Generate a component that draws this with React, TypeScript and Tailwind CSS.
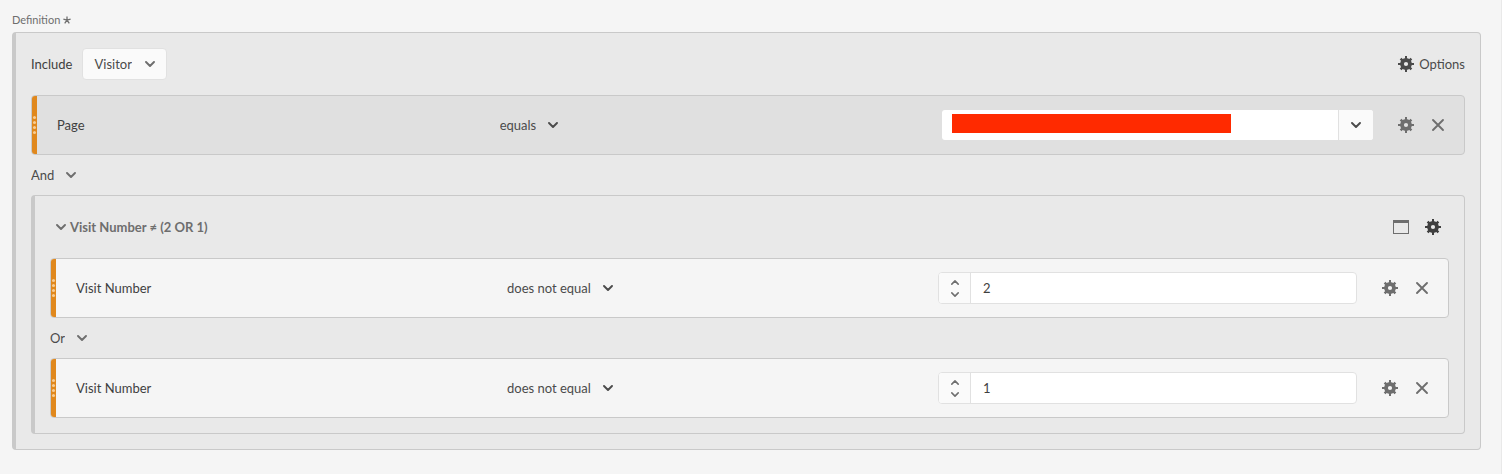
import type { ReactNode } from "react"

// ============================================
// ICONS
// ============================================
function Chevron({ className = "w-2.5 h-1.5" }: { className?: string }) {
  return (
    <svg viewBox="0 0 10 6" className={`shrink-0 ${className}`} fill="none" stroke="currentColor" strokeWidth="1.9" strokeLinecap="round" strokeLinejoin="round" aria-hidden="true">
      <path d="M1 1l4 4 4-4" />
    </svg>
  )
}

function GearIcon() {
  return (
    <svg viewBox="0 0 16 16" className="w-4 h-4 shrink-0" fill="none" stroke="currentColor" aria-hidden="true">
      <circle cx="8" cy="8" r="4" strokeWidth="3.8" />
      <path strokeWidth="2" d="M8 0v3M8 13v3M0 8h3M13 8h3" />
      <path strokeWidth="2.4" d="M2.6 2.6l2 2M11.4 11.4l2 2M2.6 13.4l2-2M11.4 4.6l2-2" />
    </svg>
  )
}

function CrossIcon() {
  return (
    <svg viewBox="0 0 16 16" className="w-4 h-4 shrink-0" fill="none" stroke="currentColor" strokeWidth="1.9" strokeLinecap="round" aria-hidden="true">
      <path d="M3 3l10 10M13 3L3 13" />
    </svg>
  )
}

function WindowIcon() {
  return (
    <svg viewBox="0 0 16 16" className="w-4 h-4 shrink-0" fill="currentColor" aria-hidden="true">
      <path fillRule="evenodd" d="M0 1h16v14H0zM1 4v10h14V4z" />
    </svg>
  )
}

function AsteriskIcon() {
  return (
    <svg viewBox="0 0 8 8" className="w-2 h-2 shrink-0" fill="none" stroke="currentColor" strokeWidth="1.3" aria-hidden="true">
      <path d="M4 4.2V.4M4 4.2l3.6-1.1M4 4.2l2.3 3.2M4 4.2L1.7 7.4M4 4.2L.4 3.1" />
    </svg>
  )
}

// ============================================
// CONTROLS
// ============================================
type DropdownProps = {
  label: string
  options: string[]
  boxed?: boolean
  dark?: boolean
}

function Dropdown({ label, options, boxed = false, dark = false }: DropdownProps) {
  return (
    <div className={`relative inline-flex items-center ${dark ? "text-[#4b4b4b]" : "text-[#6e6e6e]"}`}>
      <select
        aria-label={label}
        className={`appearance-none field-sizing-content h-8 text-[#4b4b4b] ${
          boxed ? "pl-[11px] pr-[34px] rounded border border-[#e1e1e1] bg-[#fafafa]" : "pr-[22px] bg-transparent"
        }`}
      >
        {options.map((option) => (
          <option key={option}>{option}</option>
        ))}
      </select>
      <Chevron className={`absolute w-2.5 h-1.5 pointer-events-none ${boxed ? "right-3" : "right-0"}`} />
    </div>
  )
}

function IconButton({ label, children }: { label: string; children: ReactNode }) {
  return (
    <button type="button" aria-label={label} className="flex items-center justify-center">
      {children}
    </button>
  )
}

function PageField() {
  return (
    <div className="flex h-[30px] rounded-[3px] bg-white overflow-hidden">
      <div className="flex-1 flex items-start pl-2.5 pt-1 min-w-0">
        <span className="w-[279px] h-[19px] bg-[#ff2a00]" />
        <input aria-label="Page value" className="flex-1 min-w-0 bg-transparent outline-none" />
      </div>
      <button type="button" aria-label="Show values" className="w-[35px] flex items-center justify-center border-l border-[#e1e1e1] bg-[#fafafa] text-[#4b4b4b]">
        <Chevron />
      </button>
    </div>
  )
}

function NumberField({ value }: { value: string }) {
  return (
    <div className="flex h-8 rounded border border-[#e1e1e1] bg-white overflow-hidden">
      <div className="w-8 flex flex-col items-center justify-center gap-[7px] border-r border-[#e1e1e1] bg-[#fafafa] text-[#6e6e6e]">
        <IconButton label="Increase">
          <Chevron className="w-2 h-[5px] rotate-180" />
        </IconButton>
        <IconButton label="Decrease">
          <Chevron className="w-2 h-[5px]" />
        </IconButton>
      </div>
      <input aria-label="Visit Number value" defaultValue={value} className="flex-1 min-w-0 px-3 outline-none" />
    </div>
  )
}

// ============================================
// RULE ROW
// ============================================
type RuleProps = {
  name: string
  operator: string
  shaded?: boolean
  children: ReactNode
}

function Rule({ name, operator, shaded = false, children }: RuleProps) {
  return (
    <div className={`flex items-center h-[60px] pr-[18px] rounded border border-[#c9c9c9] overflow-hidden ${shaded ? "bg-[#e0e0e0]" : "bg-[#f5f5f5]"}`}>
      {/* Drag handle */}
      <div className="w-[5px] h-full bg-[#e0881d] flex flex-col items-center justify-center gap-0.5">
        {[0, 1, 2, 3].map((dot) => (
          <span key={dot} className="w-[3px] h-[3px] rounded-full bg-[#f8cd94]" />
        ))}
      </div>
      <div className="flex-1 grid grid-cols-3 items-center pl-5">
        <span>{name}</span>
        <div>
          <Dropdown label={`${name} operator`} options={[operator]} dark />
        </div>
        <div className="pr-3">{children}</div>
      </div>
      <div className="flex gap-4 ml-[13px] text-[#6e6e6e]">
        <IconButton label="Rule options">
          <GearIcon />
        </IconButton>
        <IconButton label="Remove rule">
          <CrossIcon />
        </IconButton>
      </div>
    </div>
  )
}

function Joiner({ options }: { options: string[] }) {
  return (
    <div className="flex items-center h-10">
      <Dropdown label="Join" options={options} />
    </div>
  )
}

export default function App() {
  return (
    <main className="min-h-screen bg-[#f5f5f5] border-r border-[#e9e9e9] pl-3 pr-5 pt-3 pb-6 font-[Lato,'Noto_Sans',sans-serif] text-[13px] leading-5 text-[#3f3f3f]">
      <h1 className="flex items-center gap-[3px] h-4 mb-1 text-[11px] font-normal text-[#6e6e6e]">
        Definition
        <AsteriskIcon />
      </h1>

      <section className="rounded border border-l-4 border-[#c9c9c9] bg-[#e9e9e9] px-[15px] pb-[15px]">
        <div className="flex items-center justify-between h-[62px]">
          <div className="flex items-center gap-2.5">
            <span>Include</span>
            <Dropdown label="Include" options={["Visitor", "Visit", "Hit"]} boxed />
          </div>
          <button type="button" className="flex items-center gap-[5px] text-[#4b4b4b]">
            <GearIcon />
            Options
          </button>
        </div>

        <Rule name="Page" operator="equals" shaded>
          <PageField />
        </Rule>

        <Joiner options={["And", "Or", "Then"]} />

        {/* Nested container */}
        <section className="rounded border border-l-4 border-[#c9c9c9] px-[15px] pb-[15px]">
          <div className="flex items-center justify-between h-[62px] pl-1.5 pr-2">
            <button type="button" className="flex items-center gap-1 font-bold text-[#6e6e6e]">
              <Chevron />
              Visit Number ≠ (2 OR 1)
            </button>
            <div className="flex gap-4">
              <span className="flex text-[#6e6e6e]">
                <IconButton label="Container">
                  <WindowIcon />
                </IconButton>
              </span>
              <IconButton label="Container options">
                <GearIcon />
              </IconButton>
            </div>
          </div>

          <Rule name="Visit Number" operator="does not equal">
            <NumberField value="2" />
          </Rule>
          <Joiner options={["Or", "And", "Then"]} />
          <Rule name="Visit Number" operator="does not equal">
            <NumberField value="1" />
          </Rule>
        </section>
      </section>
    </main>
  )
}
